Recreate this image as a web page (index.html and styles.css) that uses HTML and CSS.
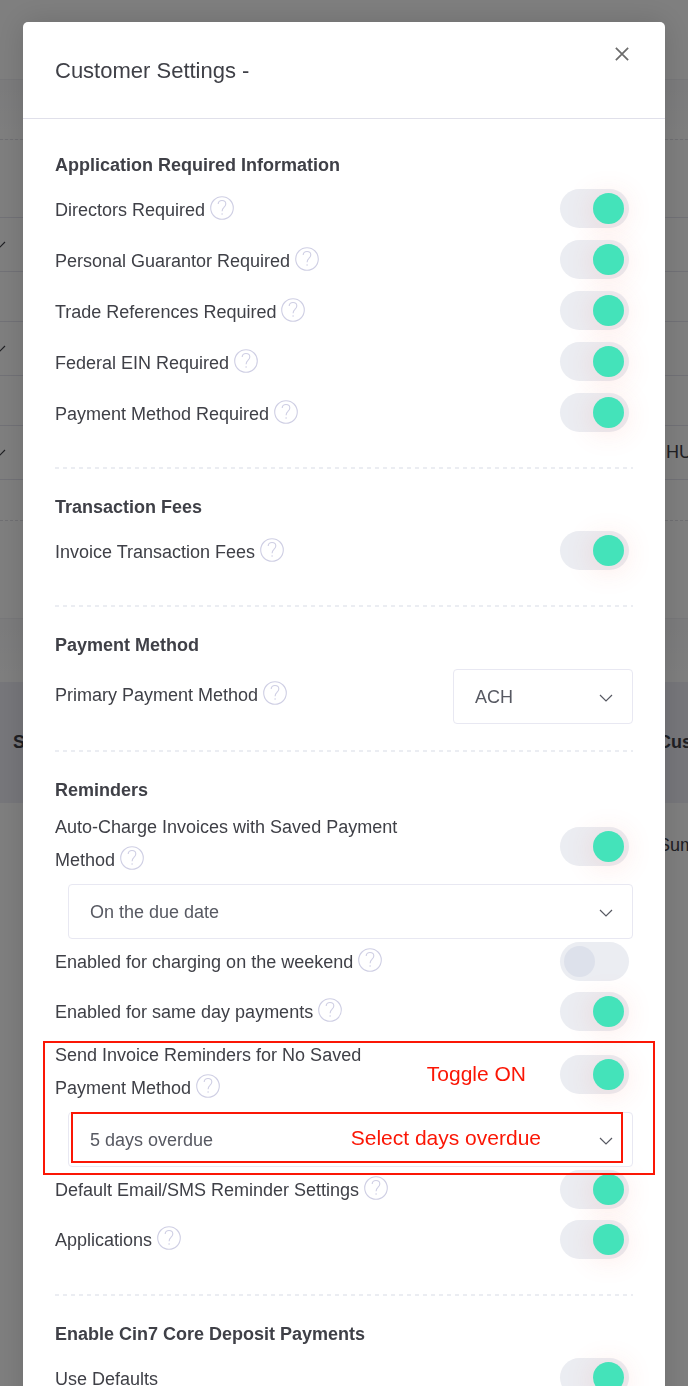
FILE: index.html
```
<!DOCTYPE html>
<html lang="en">
<head>
    <meta charset="UTF-8">
    <meta name="viewport" content="width=device-width, initial-scale=1.0">
    <title>Customer Settings</title>
    <link rel="stylesheet" href="styles.css">
</head>
<body>
    <svg class="sprite" aria-hidden="true">
        <symbol id="help" viewBox="0 0 24 24">
            <circle cx="12" cy="12" r="11.3" fill="none" stroke="currentColor" stroke-width="1.1"/>
            <path d="M8.2 8C8.2 5.7 9.8 4.5 12 4.5s3.8 1.3 3.8 3.4c0 1.5-.9 2.4-1.9 3.4-1.2 1.1-1.8 1.9-1.8 4" fill="none" stroke="currentColor" stroke-width="1.1"/>
            <circle cx="12.1" cy="18" r="0.8" fill="currentColor"/>
        </symbol>
        <symbol id="chevron" viewBox="0 0 14 8">
            <path d="M1 1l6 6 6-6" fill="none" stroke="currentColor" stroke-width="1.2"/>
        </symbol>
    </svg>

    <!-- Page behind the modal -->
    <div class="page" aria-hidden="true">
        <div class="page-header"></div>
        <div class="page-bar"></div>
        <div class="page-filters">
            <div class="filter"><svg class="filter-arrow"><use href="#chevron"/></svg></div>
            <div class="filter"><svg class="filter-arrow"><use href="#chevron"/></svg></div>
            <div class="filter"><svg class="filter-arrow"><use href="#chevron"/></svg><span>HU</span></div>
        </div>
        <div class="page-actions"></div>
        <div class="page-gap"></div>
        <div class="page-table-head"><span>S</span><span>Cus</span></div>
        <div class="page-table-row"><span>Sum</span></div>
    </div>

    <div class="overlay">
        <div class="modal" role="dialog" aria-labelledby="modalTitle">
            <div class="modal-header">
                <h2 id="modalTitle">Customer Settings -</h2>
                <button class="close" aria-label="Close">
                    <svg viewBox="0 0 16 16"><path d="M1 1l14 14M15 1L1 15" fill="none" stroke="currentColor" stroke-width="2"/></svg>
                </button>
            </div>

            <div class="modal-body">
                <section class="section">
                    <h3>Application Required Information</h3>
                    <div class="row">
                        <div class="name"><label for="directors">Directors Required</label> <button class="help" aria-label="Help"><svg><use href="#help"/></svg></button></div>
                        <input class="toggle" type="checkbox" id="directors" checked>
                    </div>
                    <div class="row">
                        <div class="name"><label for="guarantor">Personal Guarantor Required</label> <button class="help" aria-label="Help"><svg><use href="#help"/></svg></button></div>
                        <input class="toggle" type="checkbox" id="guarantor" checked>
                    </div>
                    <div class="row">
                        <div class="name"><label for="references">Trade References Required</label> <button class="help" aria-label="Help"><svg><use href="#help"/></svg></button></div>
                        <input class="toggle" type="checkbox" id="references" checked>
                    </div>
                    <div class="row">
                        <div class="name"><label for="ein">Federal EIN Required</label> <button class="help" aria-label="Help"><svg><use href="#help"/></svg></button></div>
                        <input class="toggle" type="checkbox" id="ein" checked>
                    </div>
                    <div class="row">
                        <div class="name"><label for="methodRequired">Payment Method Required</label> <button class="help" aria-label="Help"><svg><use href="#help"/></svg></button></div>
                        <input class="toggle" type="checkbox" id="methodRequired" checked>
                    </div>
                </section>

                <section class="section">
                    <h3>Transaction Fees</h3>
                    <div class="row">
                        <div class="name"><label for="fees">Invoice Transaction Fees</label> <button class="help" aria-label="Help"><svg><use href="#help"/></svg></button></div>
                        <input class="toggle" type="checkbox" id="fees" checked>
                    </div>
                </section>

                <section class="section method">
                    <h3>Payment Method</h3>
                    <div class="row">
                        <div class="name"><label for="primary">Primary Payment Method</label> <button class="help" aria-label="Help"><svg><use href="#help"/></svg></button></div>
                        <div class="select">
                            <select id="primary"><option>ACH</option></select>
                            <svg><use href="#chevron"/></svg>
                        </div>
                    </div>
                </section>

                <section class="section reminders">
                    <h3>Reminders</h3>
                    <div class="row tall">
                        <div class="name"><label for="autoCharge">Auto-Charge Invoices with Saved Payment Method</label> <button class="help" aria-label="Help"><svg><use href="#help"/></svg></button></div>
                        <input class="toggle" type="checkbox" id="autoCharge" checked>
                    </div>
                    <div class="select wide">
                        <select aria-label="Charge date"><option>On the due date</option></select>
                        <svg><use href="#chevron"/></svg>
                    </div>
                    <div class="row">
                        <div class="name"><label for="weekend">Enabled for charging on the weekend</label> <button class="help" aria-label="Help"><svg><use href="#help"/></svg></button></div>
                        <input class="toggle" type="checkbox" id="weekend">
                    </div>
                    <div class="row">
                        <div class="name"><label for="sameDay">Enabled for same day payments</label> <button class="help" aria-label="Help"><svg><use href="#help"/></svg></button></div>
                        <input class="toggle" type="checkbox" id="sameDay" checked>
                    </div>
                    <div class="highlight">
                        <div class="row tall">
                            <div class="name"><label for="noSaved">Send Invoice Reminders for No Saved Payment Method</label> <button class="help" aria-label="Help"><svg><use href="#help"/></svg></button></div>
                            <input class="toggle" type="checkbox" id="noSaved" checked>
                        </div>
                        <div class="select wide">
                            <select aria-label="Days overdue"><option>5 days overdue</option></select>
                            <svg><use href="#chevron"/></svg>
                            <div class="note-box inner"><span class="note">Select days overdue</span></div>
                        </div>
                        <div class="note-box outer"><span class="note">Toggle ON</span></div>
                    </div>
                    <div class="row">
                        <div class="name"><label for="defaults">Default Email/SMS Reminder Settings</label> <button class="help" aria-label="Help"><svg><use href="#help"/></svg></button></div>
                        <input class="toggle" type="checkbox" id="defaults" checked>
                    </div>
                    <div class="row">
                        <div class="name"><label for="applications">Applications</label> <button class="help" aria-label="Help"><svg><use href="#help"/></svg></button></div>
                        <input class="toggle" type="checkbox" id="applications" checked>
                    </div>
                </section>

                <section class="section">
                    <h3>Enable Cin7 Core Deposit Payments</h3>
                    <div class="row">
                        <div class="name"><label for="useDefaults">Use Defaults</label></div>
                        <input class="toggle" type="checkbox" id="useDefaults" checked>
                    </div>
                </section>
            </div>
        </div>
    </div>
</body>
</html>
```
FILE: styles.css
```
* {
    box-sizing: border-box;
}

body {
    margin: 0;
    height: 100vh;
    overflow: hidden;
    font-family: "Liberation Sans", Arial, sans-serif;
    font-size: 18px;
    color: #3f4047;
    background-color: #fff;
}

.sprite {
    display: none;
}

/* Page behind the modal */
.page-header {
    height: 80px;
    border-bottom: 1px solid #f0f0f4;
}

.page-bar {
    height: 60px;
    border-bottom: 1px dashed #e0e0e6;
    background: linear-gradient(#f8f8fa, #fff);
}

.page-filters {
    display: flex;
    flex-direction: column;
    gap: 49px;
    padding: 77px 0 40px;
    border-bottom: 1px dashed #e0e0e6;
}

.filter {
    display: flex;
    align-items: center;
    justify-content: space-between;
    height: 55px;
    border-top: 1px solid #e4e4ee;
    border-bottom: 1px solid #e4e4ee;
}

.filter-arrow {
    width: 14px;
    height: 8px;
    margin-left: -8px;
}

.filter span {
    width: 22px;
}

.page-actions {
    height: 98px;
    border-bottom: 1px solid #f0f0f4;
}

.page-gap {
    height: 63px;
    background: linear-gradient(#f8f8fa, #fff);
}

.page-table-head {
    display: flex;
    justify-content: space-between;
    align-items: center;
    height: 121px;
    padding-left: 13px;
    font-weight: bold;
    background-color: #eeeef6;
}

.page-table-row {
    display: flex;
    justify-content: flex-end;
    padding-top: 32px;
}

.page-table-head span:last-child,
.page-table-row span {
    width: 30px;
}

/* Modal */
.overlay {
    position: fixed;
    inset: 0;
    padding: 22px 23px;
    overflow-y: auto;
    scrollbar-width: none;
    background-color: rgba(0, 0, 0, 0.5);
}

.modal {
    background-color: #fff;
    border-radius: 5px;
    box-shadow: 0 0 30px rgba(0, 0, 0, 0.15);
}

.modal-header {
    display: flex;
    justify-content: space-between;
    align-items: flex-start;
    padding: 24px 32px;
    height: 97px;
    border-bottom: 1px solid #e0e0ea;
}

.modal-header h2 {
    margin: 0;
    font-size: 22px;
    font-weight: normal;
    line-height: 49px;
}

.close {
    width: 22px;
    height: 16px;
    padding: 0 4px;
    border: none;
    background: none;
    color: #6c6c6c;
    cursor: pointer;
}

.close svg {
    display: block;
    width: 14px;
    height: 16px;
    overflow: visible;
}

.modal-body {
    padding: 8px 32px 32px;
}

.section {
    padding: 22px 0 31px;
    background: repeating-linear-gradient(90deg, #ebedf2 0 4px, #fff 4px 8px) left bottom / 100% 2px no-repeat;
}

.section h3 {
    margin: 0 0 1px;
    font-size: 18px;
    line-height: 33px;
}

.row {
    display: flex;
    justify-content: space-between;
    align-items: center;
    min-height: 51px;
}

.name {
    max-width: 62%;
    padding-top: 3px;
    line-height: 33px;
}

.help {
    width: 24px;
    height: 24px;
    padding: 0;
    border: none;
    background: none;
    color: #cfcfe4;
    vertical-align: -4px;
    line-height: 0;
    cursor: pointer;
}

.help svg {
    width: 24px;
    height: 24px;
}

.toggle {
    appearance: none;
    flex: none;
    width: 69px;
    height: 39px;
    margin: 0 4px 0 0;
    padding: 4px;
    border-radius: 20px;
    background-color: #ebedf2;
    cursor: pointer;
}

.toggle::before {
    content: "";
    display: block;
    width: 31px;
    height: 31px;
    border-radius: 50%;
    background-color: #dde1eb;
}

.toggle:checked::before {
    margin-left: 29px;
    background-color: #44e3ba;
    box-shadow: 0 3px 30px rgba(244, 81, 60, 0.18);
}

.select {
    position: relative;
    width: 180px;
    color: #575962;
}

.select select {
    appearance: none;
    display: block;
    width: 100%;
    height: 55px;
    padding: 0 40px 0 21px;
    border: 1px solid #e8e8f2;
    border-radius: 4px;
    background-color: #fff;
    color: inherit;
    font: inherit;
}

.select > svg {
    position: absolute;
    top: 25px;
    right: 20px;
    width: 14px;
    height: 8px;
    pointer-events: none;
}

.select.wide {
    width: auto;
    margin: 0 0 -3px 13px;
}

.method {
    padding-bottom: 28px;
}

.method .select {
    margin-top: 6px;
}

.reminders {
    padding-bottom: 32px;
}

.reminders .row {
    min-height: 50px;
}

.tall .name {
    padding: 3px 0 7px;
}

/* Red notes drawn over the settings */
.highlight {
    position: relative;
    z-index: 1;
}

.note-box {
    position: absolute;
    display: flex;
    border: 2px solid #fb1605;
    color: #fb1605;
    font-size: 21px;
    pointer-events: none;
}

.note-box.outer {
    inset: 5px -22px -8px -12px;
    justify-content: flex-end;
    padding: 19px 127px 0 0;
}

.note-box.inner {
    inset: 0 10px 4px 3px;
    justify-content: flex-end;
    align-items: center;
    padding-right: 80px;
}
```
